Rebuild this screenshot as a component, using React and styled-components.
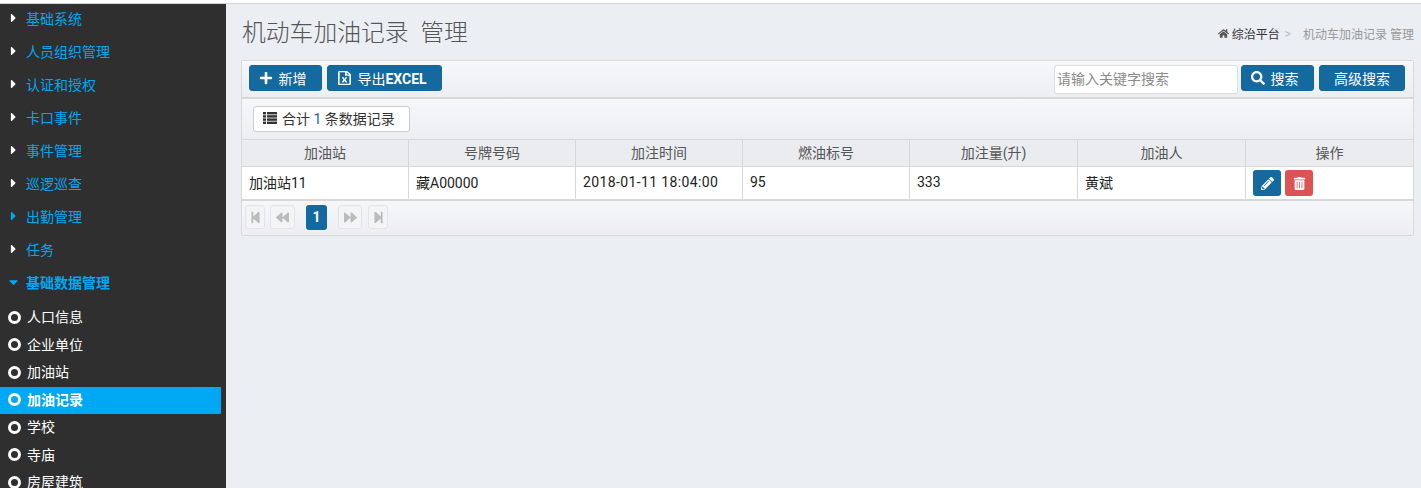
import React from 'react';
import styled, { createGlobalStyle } from 'styled-components';
import {
  FaPlus, FaRegFileExcel, FaHome, FaSearch, FaPencilAlt, FaTrashAlt,
  FaStepBackward, FaBackward, FaForward, FaStepForward, FaCaretRight, FaCaretDown,
} from 'react-icons/fa';

const GlobalStyle = createGlobalStyle`
  html, body { margin: 0; padding: 0; height: 100%; overflow: hidden; background: #fff; }
  body { font-family: Roboto, "Noto Sans CJK SC", "Liberation Sans", sans-serif; font-size: 14px; }
  * { box-sizing: border-box; }
`;

const Page = styled.div`
  display: flex;
  height: 485px;
  margin-top: 3px;
  border-top: 1px solid #d4d4d4;
  background: #ebeef3;
  overflow: hidden;
`;

const Side = styled.nav`
  width: 226px;
  flex: none;
  background: #2f2f2f;
  overflow: hidden;
`;

const MenuItem = styled.div`
  display: flex;
  align-items: center;
  height: 33px;
  padding: 0 0 6px 9px;
  color: #00a8f3;
  font-weight: ${({ $open }) => ($open ? 700 : 400)};
  svg { width: 9px; height: 14px; margin-right: 8px; color: ${({ $blue }) => ($blue ? '#00a8f3' : '#fff')}; flex: none; }
`;

const SubList = styled.div`
  margin-top: 3px;
  width: 221px;
`;

const SubItem = styled.div`
  display: flex;
  align-items: center;
  height: 27.5px;
  padding: 0 0 3px 8px;
  color: #fff;
  font-weight: ${({ $active }) => ($active ? 700 : 400)};
  background: ${({ $active }) => ($active ? '#00a8f3' : 'transparent')};
`;

const Ring = styled.span`
  width: 13px;
  height: 13px;
  margin: 2px 6px 0 0;
  border: 3px solid #fff;
  border-radius: 50%;
  flex: none;
`;

const Main = styled.main`
  flex: 1;
  padding: 0 7px 0 15px;
  min-width: 0;
`;

const Head = styled.header`
  display: flex;
  justify-content: space-between;
  align-items: flex-end;
  height: 56px;
`;

const Title = styled.h1`
  margin: 0 0 9px 1px;
  font-size: 23.8px;
  line-height: 36px;
  font-weight: 300;
  color: #555;
  white-space: pre;
`;

const Crumbs = styled.div`
  display: flex;
  align-items: center;
  margin-bottom: 18px;
  font-size: 12px;
  color: #333;
  svg { width: 11px; height: 11px; margin-right: 3px; color: #555; }
`;

const CrumbSep = styled.span`
  margin: 0 12px 0 5px;
  color: #bbb;
`;

const CrumbNow = styled.span`
  color: #999;
`;

const Panel = styled.section`
  border: 1px solid #d9d9d9;
  border-radius: 2px;
`;

const Toolbar = styled.div`
  display: flex;
  justify-content: space-between;
  align-items: flex-start;
  height: 38px;
  padding: 4px 8px 0 7px;
  border-bottom: 2px solid #d8d8d8;
  background: linear-gradient(#f6f7f9, #eceef2);
`;

const Group = styled.div`
  display: flex;
  align-items: flex-start;
  gap: 5px;
`;

const Btn = styled.button`
  display: inline-flex;
  align-items: center;
  justify-content: center;
  gap: 6px;
  width: ${({ $w }) => $w}px;
  height: 26px;
  padding: 0 ${({ $pad }) => $pad || 0}px 0 0;
  border: 1px solid #14669c;
  border-radius: 3px;
  background: #14699f;
  color: #fff;
  font: inherit;
  svg { width: 14px; height: 14px; }
`;

const ExcelIcon = styled(FaRegFileExcel)`
  && { width: 13px; }
`;

const Strong = styled.b`
  font-weight: 700;
`;

const Search = styled.input`
  width: 184px;
  height: 29px;
  margin-right: -2px;
  padding: 0 2px 2px;
  border: 1px solid #ddd;
  border-radius: 3px;
  background: #fff;
  font: inherit;
  &::placeholder { color: #8a8a8a; opacity: 1; }
`;

const ListBar = styled.div`
  display: flex;
  align-items: center;
  height: 40px;
  padding-left: 11px;
  background: linear-gradient(#f6f7f9, #eceef2);
`;

const Count = styled.div`
  display: flex;
  align-items: center;
  gap: 5px;
  width: 157px;
  height: 26px;
  padding: 0 0 2px 9px;
  border: 1px solid #ccc;
  border-radius: 3px;
  background: #fff;
  color: #333;
`;

const CountNum = styled.span`
  color: #14699f;
`;

const Table = styled.div`
  display: grid;
  grid-template-columns: 167px 167px 167px 167px 168px 168px 1fr;
  border-bottom: 2px solid #d8d8d8;
`;

const Th = styled.div`
  display: flex;
  align-items: center;
  justify-content: center;
  height: 28px;
  padding-bottom: 2px;
  border-top: 1px solid #d8d8d8;
  border-bottom: 1px solid #d8d8d8;
  border-right: 1px solid #d8d8d8;
  background: #ebecf0;
  color: #555;
  &:nth-child(7) { border-right: 0; }
`;

const Td = styled.div`
  display: flex;
  align-items: center;
  gap: 4px;
  height: 32px;
  padding: 0 0 2px 7px;
  border-right: 1px solid #d8d8d8;
  background: #fff;
  color: #222;
  letter-spacing: ${({ $wide }) => ($wide ? '0.37px' : 'normal')};
  &:last-child { border-right: 0; padding-bottom: 0; }
`;

const IconBtn = styled.button`
  display: inline-flex;
  align-items: center;
  justify-content: center;
  width: 28px;
  height: 26px;
  padding: 0;
  border: 0;
  border-radius: 3px;
  background: ${({ $danger }) => ($danger ? '#dd5252' : '#14699f')};
  color: #fff;
  svg { width: 13px; height: 13px; }
`;

const Pager = styled.div`
  display: flex;
  align-items: center;
  height: 34px;
  padding: 0 0 2px 3px;
  background: linear-gradient(#f6f7f9, #eceef2);
`;

const PageBtn = styled.span`
  display: inline-flex;
  align-items: center;
  justify-content: center;
  width: ${({ $w }) => $w}px;
  height: 24px;
  margin-right: ${({ $gap }) => $gap}px;
  border: 1px solid #e3e4e8;
  border-radius: 3px;
  background: #f3f4f6;
  color: #bbb;
  svg { width: 13px; height: 13px; }
`;

const PageNow = styled.span`
  display: inline-flex;
  align-items: center;
  justify-content: center;
  width: 21px;
  height: 25px;
  margin-right: 11px;
  border-radius: 3px;
  background: #14699f;
  color: #fff;
  font-weight: 700;
`;

const ListIcon = () => (
  <svg width="14" height="12" viewBox="0 0 14 12" fill="currentColor">
    <rect x="0" y="0" width="3" height="2.4" />
    <rect x="4" y="0" width="10" height="2.4" />
    <rect x="0" y="3.2" width="3" height="2.4" />
    <rect x="4" y="3.2" width="10" height="2.4" />
    <rect x="0" y="6.4" width="3" height="2.4" />
    <rect x="4" y="6.4" width="10" height="2.4" />
    <rect x="0" y="9.6" width="3" height="2.4" />
    <rect x="4" y="9.6" width="10" height="2.4" />
  </svg>
);

const menus = ['基础系统', '人员组织管理', '认证和授权', '卡口事件', '事件管理', '巡逻巡查', '出勤管理', '任务'];
const subs = ['人口信息', '企业单位', '加油站', '加油记录', '学校', '寺庙', '房屋建筑'];
const cols = ['加油站', '号牌号码', '加注时间', '燃油标号', '加注量(升)', '加油人', '操作'];
const row = ['加油站11', '藏A00000', '2018-01-11 18:04:00', '95', '333', '黄斌'];

export default function App() {
  return (
    <>
      <GlobalStyle />
      <Page>
        <Side>
          {menus.map((m) => (
            <MenuItem key={m} $blue={m === '出勤管理'}><FaCaretRight />{m}</MenuItem>
          ))}
          <MenuItem $open $blue><FaCaretDown />基础数据管理</MenuItem>
          <SubList>
            {subs.map((s) => (
              <SubItem key={s} $active={s === '加油记录'}><Ring />{s}</SubItem>
            ))}
          </SubList>
        </Side>
        <Main>
          <Head>
            <Title>{'机动车加油记录  管理'}</Title>
            <Crumbs>
              <FaHome />综治平台<CrumbSep>&gt;</CrumbSep><CrumbNow>机动车加油记录 管理</CrumbNow>
            </Crumbs>
          </Head>
          <Panel>
            <Toolbar>
              <Group>
                <Btn $w={73} $pad={6}><FaPlus />新增</Btn>
                <Btn $w={115} $pad={4}><ExcelIcon preserveAspectRatio="none" /><span>导出<Strong>EXCEL</Strong></span></Btn>
              </Group>
              <Group>
                <Search placeholder="请输入关键字搜索" />
                <Btn $w={73} $pad={6}><FaSearch />搜索</Btn>
                <Btn $w={86}>高级搜索</Btn>
              </Group>
            </Toolbar>
            <ListBar>
              <Count><ListIcon /><span>合计 <CountNum>1</CountNum> 条数据记录</span></Count>
            </ListBar>
            <Table>
              {cols.map((c) => <Th key={c}>{c}</Th>)}
              {row.map((c) => <Td key={c} $wide={c.includes(':')}>{c}</Td>)}
              <Td>
                <IconBtn><FaPencilAlt /></IconBtn>
                <IconBtn $danger><FaTrashAlt /></IconBtn>
              </Td>
            </Table>
            <Pager>
              <PageBtn $w={20} $gap={5}><FaStepBackward /></PageBtn>
              <PageBtn $w={25} $gap={11}><FaBackward /></PageBtn>
              <PageNow>1</PageNow>
              <PageBtn $w={24} $gap={6}><FaForward /></PageBtn>
              <PageBtn $w={20} $gap={0}><FaStepForward /></PageBtn>
            </Pager>
          </Panel>
        </Main>
      </Page>
    </>
  );
}
